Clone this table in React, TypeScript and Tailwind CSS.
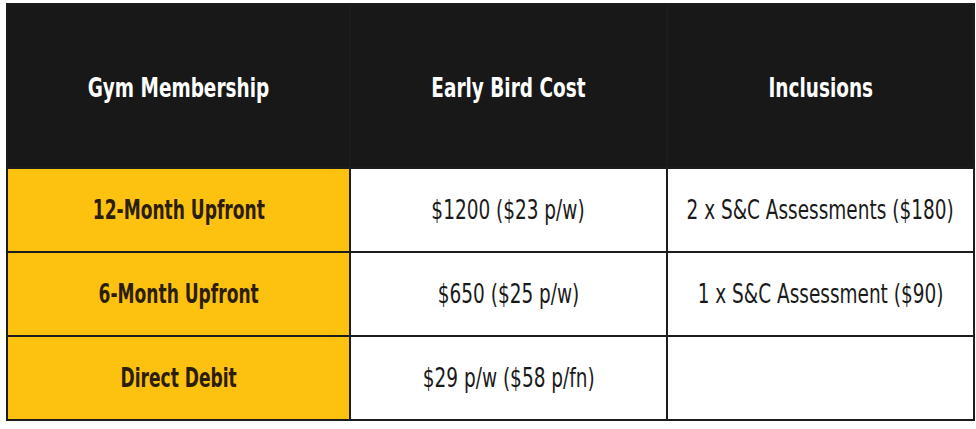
import React from 'react';

const rows = [
  { plan: '12-Month Upfront', cost: '$1200 ($23 p/w)', incl: '2 x S&C Assessments ($180)' },
  { plan: '6-Month Upfront', cost: '$650 ($25 p/w)', incl: '1 x S&C Assessment ($90)' },
  { plan: 'Direct Debit', cost: '$29 p/w ($58 p/fn)', incl: '' },
];

// condensed look: DejaVu Sans Condensed squeezed horizontally
const Narrow = ({ children, squeeze }: { children: React.ReactNode; squeeze: string }) => (
  <div className="flex justify-center">
    <span className={`shrink-0 whitespace-nowrap ${squeeze}`}>{children}</span>
  </div>
);

export default function App() {
  return (
    <div className="w-[976px] h-[429px] bg-white pl-[6px] pt-[3px]" style={{ fontFamily: '"DejaVu Sans Condensed", "Liberation Sans", sans-serif' }}>
      <table className="border-collapse border-2 border-[#1c1c1c] table-fixed w-[967px]">
        <colgroup>
          <col className="w-[343px]" />
          <col className="w-[317px]" />
          <col className="w-[307px]" />
        </colgroup>
        <thead>
          <tr className="h-[164px] bg-[#181818] text-white text-[27px] font-bold">
            <th className="border-2 border-[#1c1c1c] pt-[4px]"><Narrow squeeze="scale-x-[0.76]">Gym Membership</Narrow></th>
            <th className="border-2 border-[#1c1c1c] pt-[4px]"><Narrow squeeze="scale-x-[0.76]">Early Bird Cost</Narrow></th>
            <th className="border-2 border-[#1c1c1c] pt-[4px]"><Narrow squeeze="scale-x-[0.76]">Inclusions</Narrow></th>
          </tr>
        </thead>
        <tbody>
          {rows.map((r) => (
            <tr key={r.plan} className="h-[84px]">
              <td className="border-2 border-[#1c1c1c] bg-[#fdc20f] text-[#2b1d08] text-[26px] font-bold"><Narrow squeeze="scale-x-[0.73]">{r.plan}</Narrow></td>
              <td className="border-2 border-[#1c1c1c] text-[#1a1a1a] text-[26px]"><Narrow squeeze="scale-x-[0.79]">{r.cost}</Narrow></td>
              <td className="border-2 border-[#1c1c1c] text-[#1a1a1a] text-[26px]"><Narrow squeeze="scale-x-[0.79]">{r.incl}</Narrow></td>
            </tr>
          ))}
        </tbody>
      </table>
    </div>
  );
}
